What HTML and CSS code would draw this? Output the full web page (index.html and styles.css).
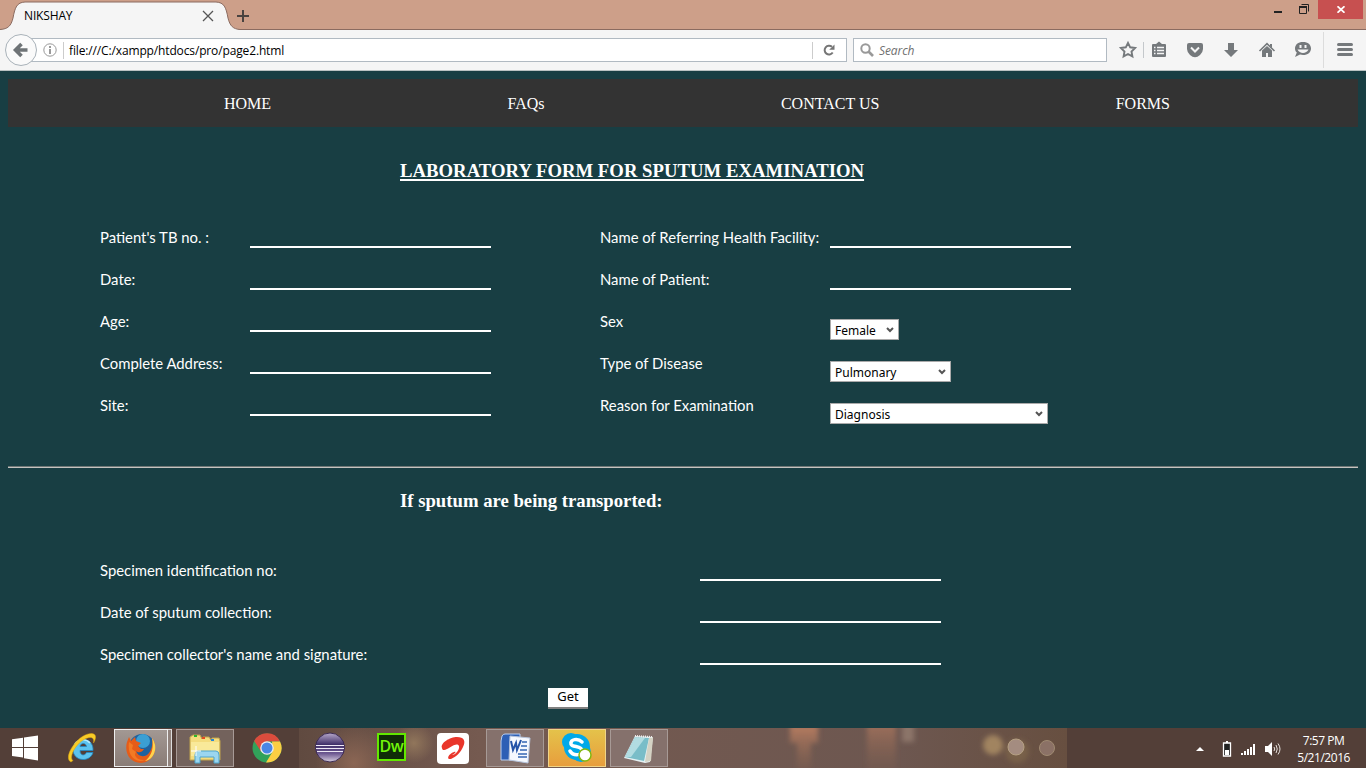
FILE: index.html
```html
<!DOCTYPE html>
<html lang="en">
<head>
<meta charset="utf-8">
<title>NIKSHAY</title>
<link rel="stylesheet" href="styles.css">
</head>
<body>
<div class="screen">
  <header class="tabs">
    <div class="tab">
      <svg class="tab-shape" width="245" height="30" viewBox="0 0 245 30"><path d="M0 29.5C8 29 11 26 13 18C15 7 17 2.500 25 2H216C224 2.500 226 7 228 18C230 26 233 29 240 29.500V30H0Z" fill="#f5f5f5"/><path d="M0 29.500C8 29 11 26 13 18C15 7 17 2.500 25 2H216C224 2.500 226 7 228 18C230 26 233 29 240 29.500H245" fill="none" stroke="#8b6b60"/></svg>
      <span class="tab-title">NIKSHAY</span>
      <svg class="tab-close" width="12" height="12" viewBox="0 0 12 12"><path d="M1 1L11 11M11 1L1 11" stroke="#555" stroke-width="1.300"/></svg>
    </div>
    <svg class="plus" width="12" height="12" viewBox="0 0 12 12"><path d="M6 0V12M0 6H12" stroke="#4a4340" stroke-width="2"/></svg>
    <div class="window-buttons">
      <svg width="52" height="19" viewBox="0 0 52 19"><path d="M8 11h8v2H8z" fill="#222"/><path d="M33.500 6.500h7v7h-7zM35.500 4.500h7v7" fill="none" stroke="#222"/><path d="M33 6h8v2h-8z" fill="#222"/></svg>
      <div class="close"><svg width="8" height="7" viewBox="0 0 8 7"><path d="M.5.300L7.500 6.700M7.500.300L.5 6.700" stroke="#fff" stroke-width="1.800"/></svg></div>
    </div>
  </header>
  <div class="toolbar">
    <svg class="back" width="34" height="34" viewBox="0 0 34 34"><circle cx="17" cy="17" r="15.500" fill="#fafafa" stroke="#a9b2b9"/><path d="M17.500 11L11.500 17L17.500 23M12 17H23.500" fill="none" stroke="#6e7376" stroke-width="3.600"/></svg>
    <div class="url">
      <svg width="14" height="14" viewBox="0 0 14 14"><circle cx="7" cy="7" r="6.200" fill="none" stroke="#999"/><path d="M6 6h2v5H6zM6 3h2v2H6z" fill="#999"/></svg>
      <i class="sep"></i>
      <span class="address">file:///C:/xampp/htdocs/pro/page2.html</span>
      <i class="sep"></i>
      <svg class="reload" width="12" height="12" viewBox="0 0 12 12"><path d="M9.700 8.500A4.400 4.400 0 1 1 9 2.800" fill="none" stroke="#757575" stroke-width="2"/><path d="M11.500.500V5.800H6.200Z" fill="#757575"/></svg>
    </div>
    <div class="search">
      <svg width="14" height="14" viewBox="0 0 14 14"><circle cx="5.500" cy="5.500" r="4.200" fill="none" stroke="#999" stroke-width="2"/><path d="M8.500 8.500L13 13" stroke="#999" stroke-width="2.600"/></svg>
      <span>Search</span>
    </div>
    <svg class="tools" width="259" height="40" viewBox="0 0 259 40">
      <path d="M21 12.800L23.200 17.300L28.100 18L24.500 21.500L25.400 26.400L21 24L16.600 26.400L17.500 21.500L13.900 18L18.800 17.300Z" fill="none" stroke="#75797c" stroke-width="1.900"/>
      <path d="M36.500 12v16" stroke="#c4c8cb"/>
      <path d="M46 14h3l3-2.500 3 2.500h3q1 0 1 1v11q0 1-1 1H46q-1 0-1-1V15q0-1 1-1z" fill="#75797c"/><path d="M47 17.500h1.500M50 17.500h7M47 20.500h1.500M50 20.500h7M47 23.500h1.500M50 23.500h7" stroke="#f5f5f5" stroke-width="1.400"/>
      <path d="M82 13h12q2 0 2 2v4q0 3-3 6-5 4.500-10 0-3-3-3-6v-4q0-2 2-2z" fill="#75797c"/><path d="M84 17.500l4 4 4-4" fill="none" stroke="#f5f5f5" stroke-width="2"/>
      <path d="M121 13h6v7h4l-7 7-7-7h4z" fill="#75797c"/>
      <path d="M152.500 21l7.500-7.300 7.500 7.300" fill="none" stroke="#75797c" stroke-width="1.600"/><path d="M163 14h2v4l-2-2zM155 20.500l5-4.500 5 4.500V27h-4v-4h-2v4h-4z" fill="#75797c"/>
      <path d="M196 12c5 0 8 2.700 8 6.500S201 25 196 25c-1 0-2-.1-3-.4L188 27l1.800-4.500C188.500 21.500 188 20 188 18.500C188 14.700 191 12 196 12z" fill="#75797c"/><path d="M192.500 15h2v3h-2zM197.500 15h2v3h-2zM190.500 19.500h11c-2 4.500-9 4.500-11 0z" fill="#f5f5f5"/>
      <path d="M216.500 2v36" stroke="#dcdcdc"/>
      <path d="M231.500 14.500h13M231.500 19.500h13M231.500 24.500h13" stroke="#75797c" stroke-width="3" stroke-linecap="round"/>
    </svg>
  </div>
  <main class="page">
    <nav class="menu"><a>HOME</a><a>FAQs</a><a>CONTACT US</a><a>FORMS</a></nav>
    <h3 class="title">LABORATORY FORM FOR SPUTUM EXAMINATION</h3>
    <form class="form">
      <div class="row"><label>Patient's TB no. :</label><input><label class="l2">Name of Referring Health Facility:</label><input></div>
      <div class="row"><label>Date:</label><input><label class="l2">Name of Patient:</label><input></div>
      <div class="row"><label>Age:</label><input><label class="l2">Sex</label><div class="select sex">Female<svg width="8" height="6" viewBox="0 0 8 6"><path d="M1 1L4 4L7 1" fill="none" stroke="#555" stroke-width="2"/></svg></div></div>
      <div class="row"><label>Complete Address:</label><input><label class="l2">Type of Disease</label><div class="select disease">Pulmonary<svg width="8" height="6" viewBox="0 0 8 6"><path d="M1 1L4 4L7 1" fill="none" stroke="#555" stroke-width="2"/></svg></div></div>
      <div class="row"><label>Site:</label><input><label class="l2">Reason for Examination</label><div class="select reason">Diagnosis<svg width="8" height="6" viewBox="0 0 8 6"><path d="M1 1L4 4L7 1" fill="none" stroke="#555" stroke-width="2"/></svg></div></div>
    </form>
    <div class="rule"></div>
    <h3 class="subtitle">If sputum are being transported:</h3>
    <form class="form transport">
      <div class="row"><label>Specimen identification no:</label><input></div>
      <div class="row"><label>Date of sputum collection:</label><input></div>
      <div class="row"><label>Specimen collector's name and signature:</label><input></div>
      <button class="get" type="button">Get</button>
    </form>
  </main>
  <footer class="taskbar">
    <div class="launch">
      <svg class="start" width="28" height="28" viewBox="0 0 28 28"><path d="M1 5.300L12 3.800V13H1zM13 3.600L27 1.500V13H13zM1 14H12V23.500L1 22zM13 14H27V26.500L13 24.300z" fill="#fff"/></svg>
      <svg class="ie" width="32" height="32" viewBox="0 0 32 32"><path d="M27 20.500C24 31 7 29.500 7 17.500C7 4 28 4 27 18.500H14C14 24 19 24 20.500 20.500ZM14 14.500H20.500C20 10.500 14.500 10.500 14 14.500Z" fill="#5cc3ee" stroke="#2289c4" stroke-width=".8" fill-rule="evenodd"/><path d="M9 12C12 7 20 6 24 11" fill="none" stroke="#b4ebff" stroke-width="1.600"/><path d="M5 30C-4 26 12 1 26 1.500C31 2 30 7 27.500 11C28.500 6 26 4 20 6.500C11 10 2 25 7 28.500Z" fill="#f8cb27" stroke="#d9a20f" stroke-width=".5"/></svg>
      <div class="task active">
        <svg width="32" height="32" viewBox="0 0 32 32"><circle cx="17" cy="15" r="13" fill="#1f629f"/><circle cx="18" cy="9" r="7" fill="#3b9fd3"/><path d="M27 6C34 15 29 30 16 31C5 31-1 21 2 10L4 5L6 9L10 5L11 9L16 11L13 14L16 17L19 17C17 21 13 21 11 19C13 25 20 26 24 21C27 17 28 11 27 6Z" fill="#e65c18"/><path d="M27 6C34 15 29 28 20 29C27 24 29 15 27 6Z" fill="#ffd34d"/><path d="M4 10L8 13L7 17L11 20C8 23 12 29 20 28C9 32 2 22 4 10Z" fill="#f27a24"/></svg>
      </div>
      <i class="stack"></i>
      <div class="task explorer">
        <svg width="34" height="32" viewBox="0 0 34 32"><path d="M2 5L5 3H12L14 7L15 5H21L23 8L24 6H31L32 9V28H2Z" fill="#f4dc7d" stroke="#bfa24c"/><path d="M3 10H31V24H3Z" fill="#f9e999"/><path d="M6 3h3v2H6z" fill="#2bb52b"/><path d="M14 5h3v2h-3z" fill="#e34a22"/><path d="M23 7h3v2h-3z" fill="#2787d6"/><path d="M7 31V23Q7 19 10 19H28Q31 19 31 23V31H26V25H12V31Z" fill="#9bd6ef" stroke="#4fa5cc"/><path d="M8 14v10M3 19h10" stroke="#fff"/></svg>
      </div>
      <svg class="chrome" width="30" height="30" viewBox="0 0 30 30"><circle cx="15" cy="15" r="14.500" fill="#31a25a"/><path d="M2.200 8A14.500 14.500 0 0 1 28 8.500H15L9 18.500Z" fill="#db4c3d"/><path d="M28 8.500A14.500 14.500 0 0 1 14 29.500L21 18L20 8.500Z" fill="#fbce43"/><circle cx="15" cy="15" r="6.800" fill="#eee"/><circle cx="15" cy="15" r="5.500" fill="#4886e5"/></svg>
    </div>
    <div class="running">
      <svg class="eclipse" width="32" height="32" viewBox="0 0 32 32"><defs><linearGradient id="ec" x2="0" y2="1"><stop stop-color="#b8a9cb"/><stop offset=".4" stop-color="#403069"/><stop offset=".7" stop-color="#6c5790"/><stop offset="1" stop-color="#d7cedf"/></linearGradient></defs><circle cx="16" cy="15.500" r="14.500" fill="url(#ec)" stroke="#3d2c53"/><path d="M2 13.500H30M2 16.500H30M3 19.500H29" stroke="#eee9f4" stroke-width="1.100"/></svg>
      <div class="dw">Dw</div>
      <svg class="airtel" width="32" height="31" viewBox="0 0 32 31"><rect width="32" height="31" rx="4" fill="#fff"/><path d="M5 15C3 10 13 4 20 4C27 4 29 8 26 14C24 19 19 24 14 26C9 27 11 21 17 19C20 18 18 21 15 22C18 22 23 17 22 13C20 9 14 14 10 16C7 18 5 17 5 15Z" fill="#e9362b"/></svg>
      <div class="task word"><svg width="31" height="31" viewBox="0 0 31 31"><path d="M2 3Q3 1 5 1H20V27H1V8Z" fill="#2d5fb5" stroke="#b8cff2"/><path d="M10 3L30 5L28 30L9 27Z" fill="#f5f8fe" stroke="#b5c3db"/><path d="M22 9h5M21 13h6M20 17h7M18 21h9M18 24h9" stroke="#3565b2" stroke-width="1.700"/><path d="M11 8l2 9 3-7 1 7 4-10" fill="none" stroke="#2554a8" stroke-width="2"/></svg></div>
      <div class="task skype"><svg width="32" height="32" viewBox="0 0 32 32"><circle cx="10" cy="10" r="9" fill="#00a9e8"/><circle cx="20" cy="20" r="10" fill="#00a9e8"/><circle cx="16" cy="15" r="13" fill="#00a9e8"/><path d="M21 10C17 6 9 7 10 12C11 16 21 13 21 19C20 24 12 24 9 19" fill="none" stroke="#fff" stroke-width="3.500" stroke-linecap="round"/><circle cx="24" cy="23" r="6" fill="#fff" stroke="#83b70e" stroke-width="1.500"/></svg></div>
      <div class="task notepad"><svg width="32" height="31" viewBox="0 0 32 31"><path d="M12 3L30 4L27 29L22 30L1 25Z" fill="#e5f1f3"/><path d="M12 4L26 5L21 28L2 24Z" fill="#79bdc8"/><path d="M12 4L22 5L8 24L2 24Z" fill="#b2dce1"/><path d="M26 5L30 4L28 28L22 29Z" fill="#d4d2c4"/><path d="M12 3L30 4" stroke="#eee" stroke-width="2" stroke-dasharray="1 1"/></svg></div>
      <svg class="bokeh" width="380" height="40" viewBox="0 0 380 40"><defs><filter id="blur"><feGaussianBlur stdDeviation="2.500"/></filter><linearGradient id="streak" x2="0" y2="1"><stop stop-color="#b87d61"/><stop offset="1" stop-color="#80604f" stop-opacity=".3"/></linearGradient></defs><g filter="url(#blur)"><path d="M103-3h28v18h-7v28h-14V15h-7z" fill="url(#streak)"/><path d="M180-4h29v47h-29z" fill="url(#streak)" opacity=".65"/><path d="M215-4h12v18h-12z" fill="#8c7569"/><circle cx="306" cy="17" r="10" fill="#a18461"/><circle cx="330" cy="23" r="12" fill="#786048"/></g><circle cx="329" cy="19" r="8" fill="#a48c80" stroke="#b5a083"/><circle cx="360" cy="20" r="7.500" fill="#8b7166" stroke="#a08a72"/></svg>
    </div>
    <div class="tray">
      <svg width="90" height="18" viewBox="0 0 90 18"><path d="M1 11L5 7L9 11Z" fill="#fff"/><path d="M30.500 3h5v13h-7V3h2z" fill="#222" stroke="#fff" stroke-width="1.300"/><path d="M31 1h2v2h-2zM30 10h4v5h-4z" fill="#fff"/><path d="M46 13h2v2h-2zM49 11h2v4h-2zM52 9h2v6h-2zM55 7h2v8h-2zM58 4h2v11h-2z" fill="#fff"/><path d="M70 6h3l4-4v14l-4-4h-3z" fill="#fff"/><path d="M79 7q1.500 2 0 4M81 5q2.500 4 0 8M83 3.500q4 5.500 0 11" fill="none" stroke="#e6e0dc"/></svg>
      <div class="clock"><span>7:57 PM</span><span>5/21/2016</span></div>
    </div>
  </footer>
</div>
</body>
</html>
```
FILE: styles.css
```css
* { box-sizing: border-box; }
body { margin: 0; overflow: hidden; }
svg { display: block; flex: none; }
.screen { width: 1366px; height: 768px; display: flex; flex-direction: column; background: #183e43; font-family: "Open Sans", sans-serif; font-size: 12px; }
.tabs { height: 30px; flex: none; display: flex; background: linear-gradient(#cd9f89 0 29px, #8b6b60 29px); }
.tab { position: relative; width: 236px; height: 30px; padding: 2px 22px 0 24px; display: flex; align-items: center; justify-content: space-between; }
.tab-shape { position: absolute; left: 0; top: 0; }
.tab-title { z-index: 1; padding-bottom: 1px; letter-spacing: -.15px; }
.tab-close { z-index: 1; }
.plus { margin: 10px 0 0 1px; }
.window-buttons { margin-left: auto; display: flex; padding-right: 3px; }
.close { width: 45px; height: 19px; background: #c75050; display: flex; align-items: center; justify-content: center; }
.toolbar { height: 41px; flex: none; display: flex; align-items: center; background: #f5f5f5; border-bottom: 1px solid #b9c2c2; }
.back { margin-left: 4px; z-index: 1; }
.url { width: 817px; height: 24px; margin-left: -8px; padding: 0 11px 0 12px; background: #fff; border: 1px solid #b1bac2; display: flex; align-items: center; }
.sep { width: 1px; height: 17px; background: #ccc; margin-left: 6px; }
.address { margin: 0 auto 0 5px; letter-spacing: -.14px; color: #000; }
.reload { margin-left: 10px; }
.search { width: 254px; height: 24px; margin-left: 6px; padding-left: 6px; background: #fff; border: 1px solid #b1bac2; display: flex; align-items: center; gap: 5px; color: #707070; font-style: italic; letter-spacing: -.1px; }
.page { flex: 1; display: flex; flex-direction: column; padding: 8px 8px 0; color: #fff; }
.menu { height: 48px; flex: none; padding: 2px 188px 0 216px; background: #333; display: flex; align-items: center; justify-content: space-between; font: 16px "Liberation Serif", serif; }
.title, .subtitle { font: bold 18.720px/22px "Liberation Serif", serif; margin: 33px 0 0 392px; }
.title { text-decoration: underline; text-decoration-thickness: 2px; text-underline-offset: 2px; letter-spacing: .025px; }
.form { margin: 35px 0 0 92px; display: flex; flex-direction: column; font: 14.850px Lato, sans-serif; }
.row { height: 42px; display: flex; align-items: center; white-space: nowrap; }
.row label { width: 150px; padding-bottom: 2px; }
.row input { width: 241px; height: 20px; padding: 0; margin: 0 0 11px; align-self: flex-end; border: 0; border-bottom: 2px solid #fff; background: none; color: #fff; outline: 0; }
.row .l2 { width: 230px; margin-left: 109px; }
.select { height: 21px; align-self: flex-end; margin-bottom: 3px; padding: 1px 4px 0; border: 1px solid #aaa; background: #fff; color: #000; display: flex; align-items: center; justify-content: space-between; font: 12px "Noto Sans", sans-serif; }
.sex { width: 69px; }
.disease { width: 121px; }
.reason { width: 218px; }
.rule { height: 2px; flex: none; margin-top: 39px; background: linear-gradient(#6d7675 1px, #c5c3c0 1px); }
.subtitle { margin-top: 22px; }
.transport { margin-top: 38px; }
.row:only-child, .transport label { width: 600px; }
.get { width: 40px; height: 21px; margin: 12px 0 0 448px; padding: 0 0 2px; border: 0; border-bottom: 2px solid #808080; background: #fff; color: #000; font: 13px/17px "Noto Sans", sans-serif; }
.taskbar { height: 40px; flex: none; display: flex; background: #533f38; }
.launch { width: 299px; display: flex; align-items: center; }
.start { margin-left: 11px; }
.ie { margin-left: 27px; }
.task { width: 58px; height: 38px; border: 1px solid #a79a96; background: #85716c; display: flex; align-items: center; justify-content: center; flex: none; }
.active { width: 54px; margin-left: 16px; border-color: #eee; background: linear-gradient(#a29893, #8a7c76); }
.stack { width: 4px; height: 38px; border: 1px solid #ddd; border-left: 0; background: #91837d; }
.explorer { margin-left: 4px; background: #73625c; }
.chrome { margin-left: 18px; }
.running { width: 768px; display: flex; align-items: center; background: radial-gradient(circle at 55px 35px, #8b6654, #8b665400 38px), radial-gradient(circle at 115px 15px, #91765b, #91765b00 20px), linear-gradient(90deg, #604a40, #755a50 180px, #6d5750 600px, #674f40); }
.eclipse { margin-left: 15px; }
.dw { width: 29px; height: 28px; margin: 0 0 2px 31px; border: 2px solid #62e800; background: #102d08; color: #72f60b; font: 600 16px/22px "Open Sans", sans-serif; letter-spacing: -.5px; text-align: center; }
.airtel { margin-left: 31px; }
.word { margin-left: 17px; }
.skype { margin-left: 4px; border-color: #f0d488; background: linear-gradient(#e4c24a, #e89e3d); }
.notepad { margin-left: 4px; }
.bokeh { margin-left: 19px; }
.tray { width: 299px; display: flex; align-items: center; padding: 2px 16px 0 128px; justify-content: space-between; color: #fff; }
.clock { display: flex; flex-direction: column; align-items: center; line-height: 17px; letter-spacing: -.45px; white-space: nowrap; }
```
